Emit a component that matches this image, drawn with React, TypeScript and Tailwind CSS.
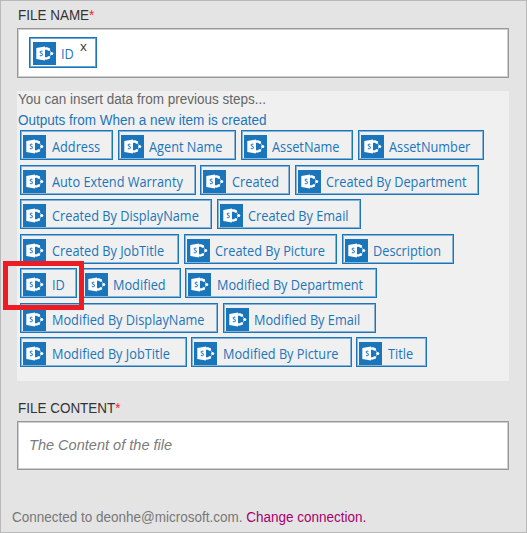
type Token = { label: string; box: string };

const rows: Token[][] = [
  [
    { label: "Address", box: "w-[93px]" },
    { label: "Agent Name", box: "w-[118.5px]" },
    { label: "AssetName", box: "w-[112.5px]" },
    { label: "AssetNumber", box: "w-[126px]" },
  ],
  [
    { label: "Auto Extend Warranty", box: "w-[175.5px]" },
    { label: "Created", box: "w-[90px]" },
    { label: "Created By Department", box: "w-[184.5px]" },
  ],
  [
    { label: "Created By DisplayName", box: "w-[192px]" },
    { label: "Created By Email", box: "w-[144px]" },
  ],
  [
    { label: "Created By JobTitle", box: "w-[159px]" },
    { label: "Created By Picture", box: "w-[153.5px]" },
    { label: "Description", box: "w-[112.5px]" },
  ],
  [
    { label: "ID", box: "w-[57px]" },
    { label: "Modified", box: "w-[99px]" },
    { label: "Modified By Department", box: "w-[192px]" },
  ],
  [
    { label: "Modified By DisplayName", box: "w-[198px]" },
    { label: "Modified By Email", box: "w-[153.5px]" },
  ],
  [
    { label: "Modified By JobTitle", box: "w-[166.5px]" },
    { label: "Modified By Picture", box: "w-[160.5px]" },
    { label: "Title", box: "w-[71px]" },
  ],
];

function SharePointIcon() {
  return (
    <svg viewBox="0 0 23 23" className="h-[23px] w-[23px] shrink-0" aria-hidden="true">
      <rect width="23" height="23" fill="#1b75bb" />
      <path d="M3.300 6 12 4.600v13.800L3.300 17z" fill="#fff" />
      <path
        d="M9.400 9.500c-.9-.6-2.300-.4-2.300.6 0 1.300 2.400 1 2.400 2.500 0 1.300-1.700 1.400-2.600.7"
        fill="none"
        stroke="#3f8bc8"
        strokeWidth="1.100"
      />
      <path
        d="M12 5.400c1.800-.3 3.400.2 4.600 1.300l-1.300 2-1.200-.9H12zM12 17.600c1.800.3 3.400-.2 4.600-1.300l-1.300-2-1.200.9H12z"
        fill="#fff"
      />
      <path d="M16 7.500l2.900 4-2.900 4" fill="none" stroke="#8fbce0" strokeWidth="1" />
      <circle cx="15.800" cy="7.400" r="1.300" fill="#fff" />
      <circle cx="18.700" cy="11.500" r="1.600" fill="#fff" />
      <circle cx="15.800" cy="15.600" r="1.300" fill="#fff" />
    </svg>
  );
}

function Chip({ label, box }: Token) {
  return (
    <div
      className={`${box} flex h-[30px] shrink-0 border border-[#1b75bb] pt-1 pl-[2px] text-[#1b75bb] shadow-[inset_0_0_0_1px_#86b4d9]`}
    >
      <SharePointIcon />
      <span className="ml-[5.5px] origin-left scale-x-[0.91] font-['Open_Sans',sans-serif] text-[14px] leading-[23px] whitespace-nowrap">
        {label}
      </span>
    </div>
  );
}

function FieldLabel({ children }: { children: string }) {
  return (
    <div className="h-5 origin-left scale-x-[0.962] leading-[22px] text-[#333]">
      {children}
      <span className="text-[#f22]">*</span>
    </div>
  );
}

export default function App() {
  return (
    <main className="h-[533px] w-[527px] border border-[#b9b9b9] bg-[#e4e4e4] pl-4 font-['Liberation_Sans',Arial,sans-serif] text-[14px]">
      <div className="pt-[3px] pl-px">
        <FieldLabel>FILE NAME</FieldLabel>
      </div>
      <div className="mt-1 flex h-[50px] w-[492px] border border-[#989898] bg-white pt-2 pl-[11px] shadow-[inset_0_0_0_1px_#cfcfcf]">
        <div className="flex h-[31px] w-[68px] border border-[#1b75bb] pt-1 pl-[3px] text-[#1b75bb] shadow-[inset_0_0_0_1px_#6ba5d3]">
          <SharePointIcon />
          <span className="ml-[5px] w-[14px] origin-left scale-x-[0.91] font-['Open_Sans',sans-serif] text-[14px] leading-[23px]">
            ID
          </span>
          <span className="-mt-[3px] ml-[5px] font-['Open_Sans',sans-serif] text-[13px] leading-[14px] text-[#333]">
            x
          </span>
        </div>
      </div>

      <section className="mt-[13px] h-[290px] w-[492px] bg-[#f0f0f0]">
        <div className="flex h-[39px] origin-left scale-x-[0.965] flex-col pl-px">
          <p className="h-[21px] leading-[17px] text-[#666]">You can insert data from previous steps...</p>
          <p className="leading-[17px] text-[#1b75bb]">Outputs from When a new item is created</p>
        </div>
        <div className="flex flex-col gap-[4.5px] pl-[3px]">
          {rows.map((row) => (
            <div key={row[0].label} className="flex gap-[4.5px]">
              {row.map((token) =>
                token.label === "ID" ? (
                  <div key={token.label} className="relative">
                    <Chip {...token} />
                    <div className="absolute -top-[7px] -left-[17px] z-10 h-[49px] w-[81px] border-[5px] border-[#ed1c24]" />
                  </div>
                ) : (
                  <Chip key={token.label} {...token} />
                ),
              )}
            </div>
          ))}
        </div>
      </section>

      <div className="mt-4 pl-px">
        <FieldLabel>FILE CONTENT</FieldLabel>
      </div>
      <div className="mt-1 h-[49px] w-[492px] border border-[#989898] bg-white pl-[11px] text-[15px] leading-[46px] text-[#7b7b7b] italic shadow-[inset_0_0_0_1px_#cfcfcf]">
        <span className="inline-block origin-left scale-x-[0.97]">The Content of the file</span>
      </div>

      <footer className="mt-[37px] -ml-[5px] origin-left scale-x-[0.964] leading-5 text-[#777]">
        Connected to deonhe@microsoft.com. <span className="text-[#a4006f]">Change connection.</span>
      </footer>
    </main>
  );
}
